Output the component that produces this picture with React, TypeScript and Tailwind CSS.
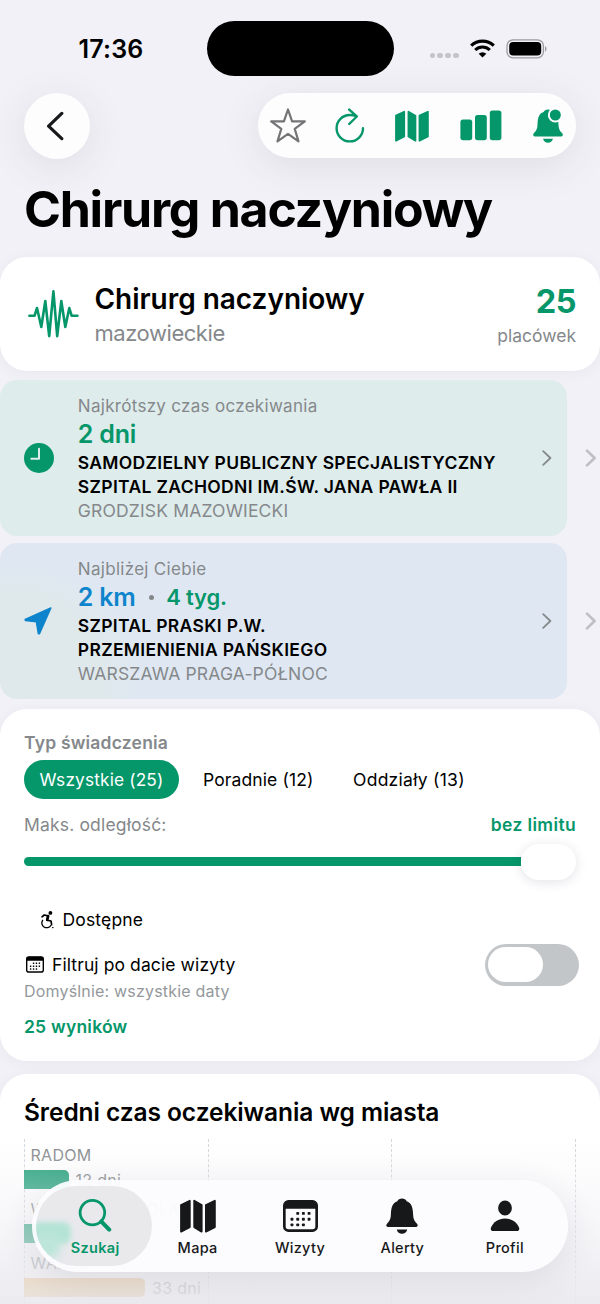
import type { ReactNode } from "react";
import clsx from "clsx";

const MAP_PATH =
  "M1 5.6 9 1.7V26L1 30.2ZM13.2 1.7 20 5.6V30.2L13.2 26ZM24 5.6 32.2 1.7V26L24 30.2Z";
const BELL_PATH =
  "M2.5 27.5C0 27.5-.5 25.5 1 24C3.6 21.4 4.3 19.6 4.5 15.5C4.8 8.5 6 4.6 10.6 3.1C11.2 1.2 13 .4 15 .4S18.8 1.2 19.4 3.1C24 4.6 25.2 8.5 25.5 15.5C25.7 19.6 26.4 21.4 29 24C30.5 25.5 30 27.5 27.5 27.5ZM10 29.8H20C19.2 32.6 17.4 33.8 15 33.8S10.8 32.6 10 29.8Z";

function MapIcon({ className }: { className: string }) {
  return (
    <svg viewBox="0 0 33.3 31.5" preserveAspectRatio="none" className={className} fill="currentColor" stroke="currentColor" strokeWidth="1.8" strokeLinejoin="round">
      <path d={MAP_PATH} />
    </svg>
  );
}

// x, y of the day dots on the calendar sheet
const DAYS = [
  [14.3, 13], [19.8, 13], [25.3, 13],
  [8.7, 18.6], [14.3, 18.6], [19.8, 18.6], [25.3, 18.6],
  [8.7, 24.1], [14.3, 24.1], [19.8, 24.1],
];

function CalendarIcon({ className }: { className: string }) {
  return (
    <svg viewBox="0 0 34 31" className={className}>
      <rect x="1.3" y="1.3" width="31.4" height="28.4" rx="4" fill="none" stroke="currentColor" strokeWidth="2.6" />
      <path d="M1 8.4V5a4 4 0 0 1 4-4h24a4 4 0 0 1 4 4v3.4Z" fill="currentColor" />
      {DAYS.map(([x, y]) => (
        <rect key={`${x}-${y}`} x={x - 1.4} y={y - 1.4} width="2.8" height="2.8" rx=".7" fill="currentColor" />
      ))}
    </svg>
  );
}

function StatusBar() {
  return (
    <div className="flex h-[93px] items-start">
      <span className="ml-[78.5px] mt-[34px] w-[128px] text-[25px] leading-[30px] font-semibold tracking-[0.2px]">17:36</span>
      <div className="mt-[21px] h-[55px] w-[187px] rounded-full bg-black" />
      <div className="ml-[36px] mt-[52.5px] flex gap-[2.6px]">
        {[0, 1, 2, 3].map((i) => (
          <i key={i} className="size-[5.4px] rounded-full bg-[#c2c4c8]" />
        ))}
      </div>
      <svg viewBox="0 0 25 19" className="ml-[11px] mt-[39px] h-[19px] w-[25px]" fill="none" stroke="#000" strokeWidth="3.1">
        <path d="M1.2 6.7a16.2 16.2 0 0 1 22.6 0" />
        <path d="M5.2 11a10.4 10.4 0 0 1 14.6 0" />
        <path d="M12.5 18.6 8.7 14.8a5.5 5.5 0 0 1 7.6 0Z" fill="#000" stroke="none" />
      </svg>
      <svg viewBox="0 0 42 20" className="ml-[11px] mt-[39px] h-[20px] w-[42px]">
        <rect x="1" y=".8" width="36.4" height="18" rx="6" fill="none" stroke="#9c9ca1" strokeWidth="1.3" />
        <rect x="3.2" y="3" width="32" height="13.6" rx="4" />
        <path d="M39 7v5.6c2-.6 2-5 0-5.6Z" fill="#9c9ca1" />
      </svg>
    </div>
  );
}

function Toolbar() {
  return (
    <div className="flex h-[66px] justify-between px-6">
      <button className="flex size-[66px] items-center justify-center rounded-full bg-[#fdfdfe] shadow-[0_8px_40px_rgba(60,60,80,0.1)]">
        <svg viewBox="0 0 18 30" className="mr-[4px] h-[30px] w-[18px]" fill="none" stroke="#18191b" strokeWidth="3.2" strokeLinecap="round" strokeLinejoin="round">
          <path d="M15.8 2.4 2.6 15.2 15.8 27.6" />
        </svg>
      </button>
      <div className="flex h-[65px] w-[318px] items-center rounded-full bg-[#fdfdfe] pl-[12px] text-[#059669] shadow-[0_8px_40px_rgba(60,60,80,0.1)]">
        <svg viewBox="0 0 36 35" className="h-[35px] w-[36px]" fill="none" stroke="#747477" strokeWidth="2.2" strokeLinejoin="round">
          <path d="M18 1.5 22.1 13.4H34.8L24.7 20.9 28.5 33.3 18 25.8 7.5 33.3 11.3 20.9 1.2 13.4H13.9Z" />
        </svg>
        <svg viewBox="0 0 30 36" className="ml-[29px] h-[36px] w-[30px]" fill="none" stroke="currentColor" strokeWidth="2.4" strokeLinecap="round" strokeLinejoin="round">
          <path d="M28 20.2A13.2 13.2 0 1 1 14.8 7Q18.6 7 21.6 8.4M14.2 1.6 21.8 8.5 14.2 16" />
        </svg>
        <MapIcon className="ml-[30px] h-[32px] w-[34px]" />
        <svg viewBox="0 0 42 31" className="ml-[31px] h-[31px] w-[42px]" fill="currentColor">
          <rect x=".4" y="9.6" width="11.8" height="20.6" rx="2.6" />
          <rect x="15" y="5" width="11.8" height="25.2" rx="2.6" />
          <rect x="29.8" y=".6" width="11.6" height="29.6" rx="2.6" />
        </svg>
        <svg viewBox="0 0 30 34" className="ml-[31px] h-[34px] w-[30px] overflow-visible" fill="currentColor">
          <path d={BELL_PATH} />
          <circle cx="22.3" cy="6" r="7.4" fill="#fdfdfe" />
          <circle cx="22.3" cy="6" r="5.5" />
        </svg>
      </div>
    </div>
  );
}

type HighlightProps = {
  caption: string;
  icon: ReactNode;
  value: ReactNode;
  lines: [string, string];
  city: string;
  className: string;
};

function Highlight({ caption, icon, value, lines, city, className }: HighlightProps) {
  return (
    <div className="flex h-[156.5px] items-center">
      <div className={clsx("flex h-full w-[567px] items-center rounded-[17px] pl-6", className)}>
        <div className="w-[53.8px]">{icon}</div>
        <div className="h-full flex-1 pt-[14px] text-[17.5px] leading-6 whitespace-nowrap">
          <p className="text-[17px] tracking-[0.3px] text-[#85888b]">{caption}</p>
          <div className="mt-px flex h-[30px] items-center text-[25px] leading-[30px] font-semibold tracking-[-0.2px]">{value}</div>
          <p className="mt-[2px] font-semibold tracking-[0.31px]">{lines[0]}</p>
          <p className="font-semibold tracking-[0.34px]">{lines[1]}</p>
          <p className="tracking-[0.17px] text-[#85888b]">{city}</p>
        </div>
        <svg viewBox="0 0 10 16" className="mr-[15.5px] h-[16px] w-[10px]" fill="none" stroke="#85898b" strokeWidth="1.8" strokeLinecap="round" strokeLinejoin="round">
          <path d="M1.2 1.2 8.4 8 1.2 14.8" />
        </svg>
      </div>
      <svg viewBox="0 0 12 18" className="ml-[17.5px] h-[18px] w-[12px]" fill="none" stroke="#bfc0c5" strokeWidth="2.7" strokeLinecap="round" strokeLinejoin="round">
        <path d="M2 1.6 9.6 9 2 16.4" />
      </svg>
    </div>
  );
}

function Filters() {
  return (
    <section className="mt-[9.5px] h-[352px] rounded-[27px] bg-white px-6 pt-[22.5px] text-[17.5px] leading-6 whitespace-nowrap shadow-[0_2px_14px_rgba(60,60,80,0.05)]">
      <p className="font-semibold tracking-[0.2px] text-[#85888b]">Typ świadczenia</p>
      <div className="mt-[4.5px] flex h-[39px] items-center pt-px tracking-[0.2px]">
        <span className="mt-[-1px] flex h-[39px] w-[155px] items-center justify-center rounded-full bg-[#059669] pt-px text-[17.3px] tracking-[0.15px] text-white">Wszystkie (25)</span>
        <span className="ml-[24px] w-[150px] tracking-[0.12px]">Poradnie (12)</span>
        <span className="tracking-[0.27px]">Oddziały (13)</span>
      </div>
      <div className="mt-[14.5px] flex justify-between">
        <span className="tracking-[0.17px] text-[#85888b]">Maks. odległość:</span>
        <span className="font-semibold tracking-[0.35px] text-[#059669]">bez limitu</span>
      </div>
      <div className="mt-[6.5px] flex h-[36px] items-center">
        <div className="h-[9px] w-[497px] rounded-l-full bg-[#059669]" />
        <div className="h-[36px] w-[55px] rounded-full bg-white shadow-[0_2px_12px_rgba(60,60,90,0.14)]" />
      </div>
      <div className="mt-[28px] flex items-center gap-[7.5px] pl-[16px]">
        <svg viewBox="0 0 15 18" className="h-[18px] w-[15px]" fill="none" stroke="#000" strokeWidth="1.7" strokeLinecap="round" strokeLinejoin="round">
          <circle cx="10.4" cy="1.9" r="1.9" fill="#000" stroke="none" />
          <path d="M2 5.8 4.2 4 8 4.8 6.8 9.2 11 10 11.6 13.6" />
          <path d="M8.2 5 7.2 8.8" strokeWidth="2.6" />
          <path d="M2.6 9.4A4.8 4.6 0 1 0 10.8 14.6M12.6 16.6h.4" strokeWidth="1.3" />
        </svg>
        <span className="tracking-[0.17px]">Dostępne</span>
      </div>
      <div className="mt-[12px] flex items-start justify-between">
        <div>
          <div className="mt-[9px] flex items-center gap-[8px]">
            <CalendarIcon className="ml-[2px] h-[17px] w-[18px]" />
            <span className="tracking-[0.1px]">Filtruj po dacie wizyty</span>
          </div>
          <p className="mt-[4.5px] text-[16px] leading-5 tracking-[0.19px] text-[#94989b]">Domyślnie: wszystkie daty</p>
        </div>
        <button className="mr-[-3px] flex h-[42px] w-[94px] items-center rounded-full bg-[#c3c6c9] pl-[3px]">
          <span className="h-[35px] w-[55px] rounded-full bg-white" />
        </button>
      </div>
      <p className="mt-[13.5px] font-semibold tracking-[0.22px] text-[#059669]">25 wyników</p>
    </section>
  );
}

const cities = [
  { name: "RADOM", days: "12 dni", bar: "w-[44.5px] bg-[#1fa077]" },
  { name: "WARSZAWA WOLA", bar: "w-[48px] bg-[#1fa077]" },
  { name: "WARSZAWA", days: "33 dni", bar: "w-[121px] bg-[#eaae55]" },
];

function CityChart() {
  return (
    <section className="mt-[13px] h-[260px] rounded-t-[27px] bg-white px-6 pt-[23.5px] shadow-[0_2px_14px_rgba(60,60,80,0.05)]">
      <h2 className="text-[24.5px] leading-[30px] font-semibold tracking-[-0.07px] whitespace-nowrap">Średni czas oczekiwania wg miasta</h2>
      <div className="relative mt-[11.5px] h-[180px] pt-[6px]">
        <div className="absolute inset-0 flex justify-between">
          {[0, 1, 2, 3].map((i) => (
            <i key={i} className="h-full w-0 border-l-[1.5px] border-dashed border-[#d3d6d8]" />
          ))}
        </div>
        {cities.map((c) => (
          <div key={c.name} className="relative h-[54px] text-[16px] leading-5 tracking-[0.3px] text-[#85888b]">
            <p className="pl-[6.5px]">{c.name}</p>
            <div className="mt-[5px] flex items-center">
              <div className={clsx("h-[19.5px] rounded-r-[5px]", c.bar)} />
              {c.days && <span className="ml-[7px]">{c.days}</span>}
            </div>
          </div>
        ))}
      </div>
    </section>
  );
}

function TabBar() {
  const tabs = [
    {
      label: "Szukaj",
      icon: (
        <svg viewBox="0 0 34 35" className="h-[35px] w-[34px]" fill="none" stroke="currentColor" strokeLinecap="round">
          <circle cx="14.4" cy="14.6" r="12.3" strokeWidth="2.8" />
          <path d="M23.4 23.6 31.2 31.6" strokeWidth="4.2" />
        </svg>
      ),
    },
    { label: "Mapa", icon: <MapIcon className="h-[34px] w-[36px]" /> },
    { label: "Wizyty", icon: <CalendarIcon className="h-[32px] w-[35px]" /> },
    {
      label: "Alerty",
      icon: (
        <svg viewBox="0 0 30 34" className="h-[36px] w-[32px]" fill="currentColor">
          <path d={BELL_PATH} />
        </svg>
      ),
    },
    {
      label: "Profil",
      icon: (
        <svg viewBox="0 0 30 32" className="h-[32px] w-[30px]" fill="currentColor">
          <ellipse cx="15" cy="8" rx="6.9" ry="7.6" />
          <path d="M3.4 31C.8 31 .4 29.4 1 27.6C3 22 8.6 18.4 15 18.4S27 22 29 27.6C29.6 29.4 29.2 31 26.6 31Z" />
        </svg>
      ),
    },
  ];

  return (
    <nav className="absolute inset-x-8 top-[1180px] h-[92px] overflow-hidden rounded-full bg-[#fcfcfe]/95">
      <div className="absolute left-[4px] top-[6px] h-[80px] w-[116px] overflow-hidden rounded-full bg-[#e9e9ec]">
        <div className="absolute -left-[4px] top-[36px] h-[22px] w-[39px] rounded-lg bg-[#b4e4d5] blur-[2.5px]" />
        <div className="absolute -left-[2px] top-[48px] h-[24px] w-[26px] rounded-lg bg-[#bde5d9] blur-[4px]" />
      </div>
      <div className="relative flex h-full px-[12px] text-[#17181a]">
        {tabs.map((tab, i) => (
          <div key={tab.label} className={clsx("flex flex-1 flex-col items-center pt-[16.5px] font-medium", i === 0 && "font-semibold text-[#059669]")}>
            <div className="flex h-[38px] items-center">{tab.icon}</div>
            <span className="mt-[3px] text-[14.5px] leading-[20px] tracking-[0.3px]">{tab.label}</span>
          </div>
        ))}
      </div>
    </nav>
  );
}

export default function App() {
  return (
    <main className="relative h-[1304px] w-[600px] overflow-hidden bg-[#f2f1f7] font-['Inter',sans-serif] text-black">
      <StatusBar />
      <Toolbar />
      <h1 className="mt-[20px] pl-6 text-[50px] leading-[60px] font-bold tracking-[-1.25px] whitespace-nowrap">Chirurg naczyniowy</h1>

      <section className="mt-[18px] flex h-[113.5px] items-start rounded-[27px] bg-white px-6 pt-[25px] shadow-[0_2px_14px_rgba(60,60,80,0.05)]">
        <svg viewBox="0 0 51 48" className="ml-[3.5px] mt-[7.5px] h-[48px] w-[51px]" fill="none" stroke="#059669" strokeWidth="2.6" strokeLinecap="round" strokeLinejoin="round">
          <path d="M1.4 25.7H6.6L9 18 13.3 37 17.3 11 21.2 46.2 25.4 1.4 29.2 46.2 33.3 11 37.3 37 41.3 18 43.6 25.7H49.4" />
        </svg>
        <div className="ml-[16px] flex-1 whitespace-nowrap">
          <p className="text-[28px] leading-[34px] font-semibold tracking-[-0.03px]">Chirurg naczyniowy</p>
          <p className="mt-[3px] text-[22px] leading-[28px] tracking-[-0.45px] text-[#85888b]">mazowieckie</p>
        </div>
        <div className="text-right">
          <p className="text-[32.5px] leading-[40px] font-bold tracking-[-0.5px] text-[#059669]">25</p>
          <p className="mt-[3px] text-[17.5px] leading-[22px] text-[#85888b]">placówek</p>
        </div>
      </section>

      <div className="mt-[9px] flex flex-col gap-[6.5px]">
        <Highlight
          className="bg-[#deeceb]"
          caption="Najkrótszy czas oczekiwania"
          icon={
            <svg viewBox="0 0 30 30" className="size-[30px]">
              <circle cx="15" cy="15" r="15" fill="#059669" />
              <path d="M15 5.8V15.8H7.3" fill="none" stroke="#deeceb" strokeWidth="2" strokeLinecap="round" strokeLinejoin="round" />
            </svg>
          }
          value={<span className="text-[#059669]">2 dni</span>}
          lines={["SAMODZIELNY PUBLICZNY SPECJALISTYCZNY", "SZPITAL ZACHODNI IM.ŚW. JANA PAWŁA II"]}
          city="GRODZISK MAZOWIECKI"
        />
        <Highlight
          className="bg-[#dfe8f2] bg-[radial-gradient(ellipse_130px_110px_at_10px_130px,#dfe9eb_70%,transparent)]"
          caption="Najbliżej Ciebie"
          icon={
            <svg viewBox="0 0 30 30" className="size-[30px]" fill="#0d84cb" stroke="#0d84cb" strokeWidth="1.6" strokeLinejoin="round">
              <path d="M26.8 2 1.2 13.6 1.4 14.4 12.4 15.6 14.4 27.6 15.4 27.6Z" />
            </svg>
          }
          value={
            <>
              <span className="text-[#0d84cb]">2 km</span>
              <i className="ml-[13px] mt-[2px] size-[5px] rounded-full bg-[#85888b]" />
              <span className="ml-[12.5px] text-[22px] tracking-[-0.15px] text-[#059669]">4 tyg.</span>
            </>
          }
          lines={["SZPITAL PRASKI P.W.", "PRZEMIENIENIA PAŃSKIEGO"]}
          city="WARSZAWA PRAGA-PÓŁNOC"
        />
      </div>

      <Filters />
      <CityChart />

      {/* fade under the floating tab bar */}
      <div className="absolute inset-x-0 top-[1135px] h-[169px] bg-linear-to-b from-[#f7f7fa]/0 via-[#f0f0f5]/50 to-[#e9e9ee]/90" />
      <div className="absolute inset-x-8 top-[1180px] h-[92px] rounded-full shadow-[0_8px_34px_rgba(50,50,70,0.1)]" />
      <TabBar />
    </main>
  );
}
